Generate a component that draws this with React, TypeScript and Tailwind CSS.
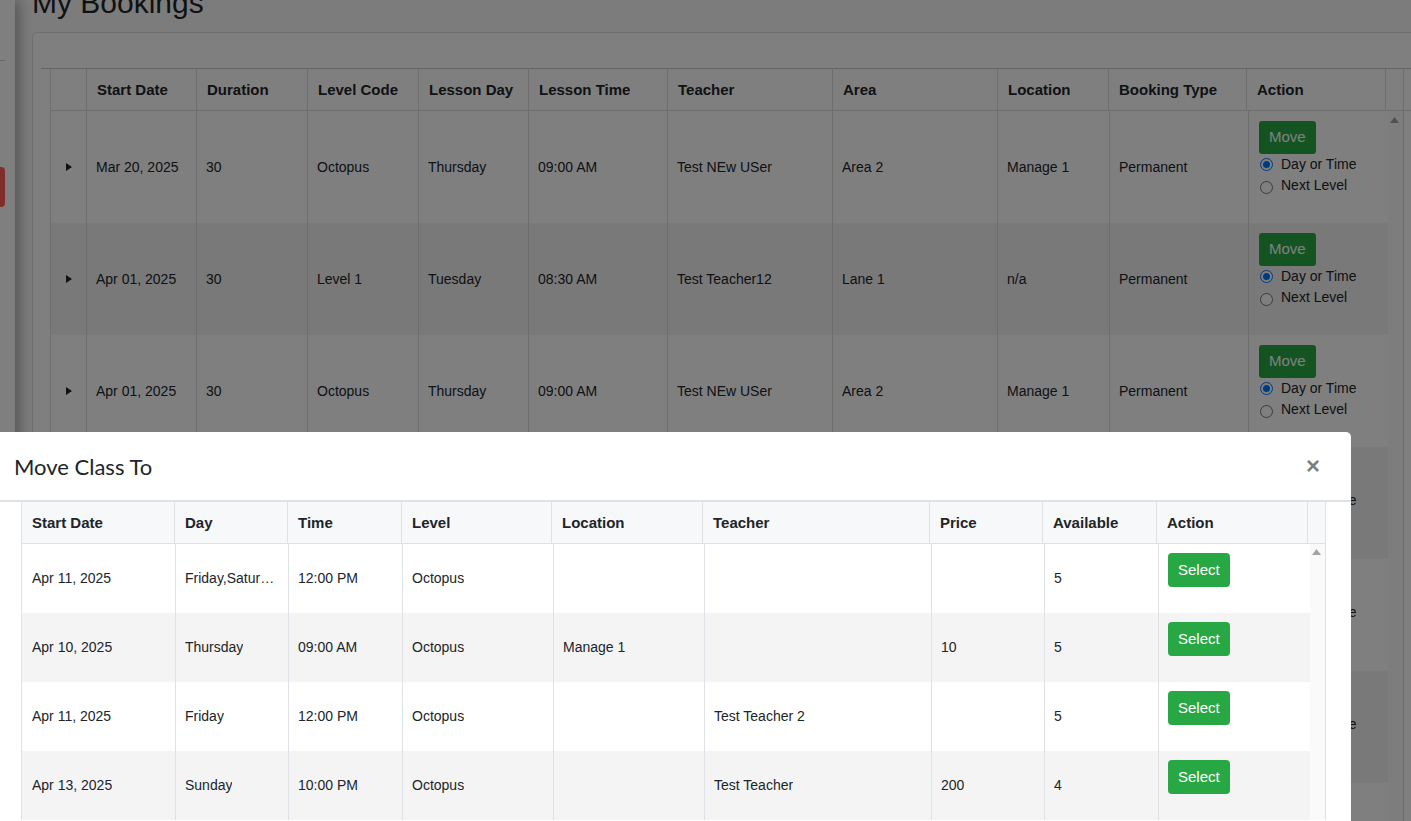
import React from "react";

const bookingCols = [36, 110, 111, 111, 110, 139, 165, 165, 111, 138, 139];
const bookingHeads = ["", "Start Date", "Duration", "Level Code", "Lesson Day", "Lesson Time", "Teacher", "Area", "Location", "Booking Type", "Action"];

const bookings = [
  ["Mar 20, 2025", "30", "Octopus", "Thursday", "09:00 AM", "Test NEw USer", "Area 2", "Manage 1", "Permanent"],
  ["Apr 01, 2025", "30", "Level 1", "Tuesday", "08:30 AM", "Test Teacher12", "Lane 1", "n/a", "Permanent"],
  ["Apr 01, 2025", "30", "Octopus", "Thursday", "09:00 AM", "Test NEw USer", "Area 2", "Manage 1", "Permanent"],
  ["Apr 08, 2025", "30", "Octopus", "Tuesday", "09:00 AM", "Test NEw USer", "Area 2", "Manage 1", "Permanent"],
  ["Apr 10, 2025", "30", "Level 1", "Thursday", "08:30 AM", "Test Teacher12", "Lane 1", "n/a", "Permanent"],
  ["Apr 15, 2025", "30", "Octopus", "Tuesday", "09:00 AM", "Test NEw USer", "Area 2", "Manage 1", "Permanent"],
  ["Apr 17, 2025", "30", "Octopus", "Thursday", "09:00 AM", "Test NEw USer", "Area 2", "Manage 1", "Permanent"],
];

const headCols = [153, 113, 114, 150, 151, 227, 113, 114, 151];
const bodyCols = [154, 113, 114, 151, 151, 227, 113, 114, 151];
const classHeads = ["Start Date", "Day", "Time", "Level", "Location", "Teacher", "Price", "Available", "Action"];

const classes = [
  ["Apr 11, 2025", "Friday,Saturday", "12:00 PM", "Octopus", "", "", "", "5"],
  ["Apr 10, 2025", "Thursday", "09:00 AM", "Octopus", "Manage 1", "", "10", "5"],
  ["Apr 11, 2025", "Friday", "12:00 PM", "Octopus", "", "Test Teacher 2", "", "5"],
  ["Apr 13, 2025", "Sunday", "10:00 PM", "Octopus", "", "Test Teacher", "200", "4"],
];

function UpArrow() {
  return (
    <svg width="9" height="6" viewBox="0 0 9 6">
      <polygon points="0,6 4.5,0 9,6" fill="#a3a3a3" />
    </svg>
  );
}

function Radio({ checked, label }: { checked?: boolean; label: string }) {
  return (
    <div className="flex h-[21px] items-center">
      <span
        className={
          checked
            ? "ml-[1px] flex h-[13px] w-[13px] items-center justify-center rounded-full border-[1.5px] border-[#0075ff] bg-white"
            : "ml-[1px] mt-[3px] h-[13px] w-[13px] rounded-full border border-[#767676] bg-white"
        }
      >
        {checked && <span className="h-[7px] w-[7px] rounded-full bg-[#0075ff]" />}
      </span>
      <span className="ml-[8px] text-[14px]">{label}</span>
    </div>
  );
}

export default function App() {
  return (
    <div className="relative h-screen w-full overflow-hidden bg-[#f9f9f9] font-['Liberation_Sans',Arial,sans-serif] text-[#212529]">
      {/* Page behind the modal */}
      <div className="flex h-full">
        <aside className="w-[15px] shrink-0 bg-white shadow-[4px_0_14px_rgba(0,0,0,0.35)]">
          <div className="mt-[60px] h-px w-[5px] bg-[#cfcfcf]" />
          <div className="mt-[106px] h-[40px] w-[5px] rounded-r-[4px] bg-[#ff5a5a]" />
        </aside>

        <main className="min-w-0 flex-1 pl-[17px]">
          <h1 className="-mt-[15px] text-[30px] leading-[36px] font-normal">My Bookings</h1>
          <div className="mt-[11px] w-[1420px] rounded-[5px] border border-[#dcdcdc] bg-white pl-[8px] pt-[35px]">
            <div className="border-t border-[#c8c8c8] pl-[9px]">
              {/* header */}
              <div className="flex h-[42px] border-b border-l border-[#dcdcdc]">
                {bookingHeads.map((h, i) => (
                  <div
                    key={i}
                    style={{ width: bookingCols[i] }}
                    className="flex shrink-0 items-center border-r border-[#dcdcdc] pl-[10px] pt-[1px] text-[15px] font-bold"
                  >
                    {h}
                  </div>
                ))}
                <div className="w-[18px] shrink-0 border-r border-[#dcdcdc]" />
              </div>
              {/* body */}
              <div className="flex border-l border-[#dcdcdc]">
                <div>
                  {bookings.map((r, ri) => (
                    <div key={ri} className={"flex h-[112px] " + (ri % 2 === 1 ? "bg-[#f2f2f2]" : "bg-white")}>
                      <div
                        style={{ width: bookingCols[0] }}
                        className="flex shrink-0 items-center justify-center border-r border-[#dcdcdc]"
                      >
                        <svg width="6" height="8" viewBox="0 0 6 8">
                          <polygon points="0,0 6,4 0,8" fill="#212529" />
                        </svg>
                      </div>
                      {r.map((c, ci) => (
                        <div
                          key={ci}
                          style={{ width: bookingCols[ci + 1] + (ci >= 7 ? 1 : 0) }}
                          className="flex shrink-0 items-center border-r border-[#dcdcdc] pl-[9px] text-[14px]"
                        >
                          {c}
                        </div>
                      ))}
                      <div style={{ width: bookingCols[10] }} className="shrink-0 pl-[10px] pt-[10px]">
                        <button className="h-[33px] rounded-[3px] bg-[#28a745] px-[10px] text-[15px] text-white">
                          Move
                        </button>
                        <Radio checked label="Day or Time" />
                        <Radio label="Next Level" />
                      </div>
                    </div>
                  ))}
                </div>
                <div className="w-[16px] shrink-0 border-r border-[#dcdcdc] bg-[#fafafa] pl-[2px] pt-[6px]">
                  <UpArrow />
                </div>
              </div>
            </div>
          </div>
        </main>
      </div>

      {/* Backdrop */}
      <div className="absolute inset-0 bg-black/50" />

      {/* Modal */}
      <div className="absolute left-0 top-[432px] h-[420px] w-[1351px] rounded-tr-[5px] bg-white">
        <div className="flex h-[70px] items-center justify-between border-b-2 border-[#dee2e6] pl-[14px] pr-[31px]">
          <h5 className="pt-[2px] font-['Lato',sans-serif] text-[22px] leading-[28px] text-[#212529]">Move Class To</h5>
          <button className="font-['Liberation_Sans',Arial,sans-serif] text-[24px] font-bold leading-none text-black opacity-50">
            ×
          </button>
        </div>
        <div className="pl-[21px]">
          <div className="flex h-[42px] w-max border-b border-l border-[#dee2e6] bg-[#f7f8fa]">
            {classHeads.map((h, i) => (
              <div
                key={i}
                style={{ width: headCols[i] }}
                className="flex shrink-0 items-center border-r border-[#dee2e6] pl-[10px] pt-[2px] text-[15px] font-bold"
              >
                {h}
              </div>
            ))}
            <div className="w-[18px] shrink-0 border-r border-[#dee2e6]" />
          </div>
          <div className="flex w-max border-l border-[#dee2e6]">
            <div>
              {classes.map((r, ri) => (
                <div key={ri} className={"flex h-[69px] " + (ri % 2 === 1 ? "bg-[#f4f4f5]" : "bg-white")}>
                  {r.map((c, ci) => (
                    <div
                      key={ci}
                      style={{ width: bodyCols[ci] }}
                      className={
                        "flex shrink-0 items-center border-r border-[#dee2e6] pr-[9px] text-[14px] " +
                        (ci === 0 ? "pl-[10px]" : "pl-[9px]")
                      }
                    >
                      <span className="truncate">{c}</span>
                    </div>
                  ))}
                  <div style={{ width: bodyCols[8] }} className="shrink-0 pl-[9px] pt-[9px]">
                    <button className="h-[34px] rounded-[4px] bg-[#28a745] px-[10px] text-[15px] text-white">
                      Select
                    </button>
                  </div>
                </div>
              ))}
            </div>
            <div className="w-[16px] shrink-0 border-r border-[#dee2e6] bg-[#fafafa] pl-[2px] pt-[5px]">
              <UpArrow />
            </div>
          </div>
        </div>
      </div>
    </div>
  );
}
